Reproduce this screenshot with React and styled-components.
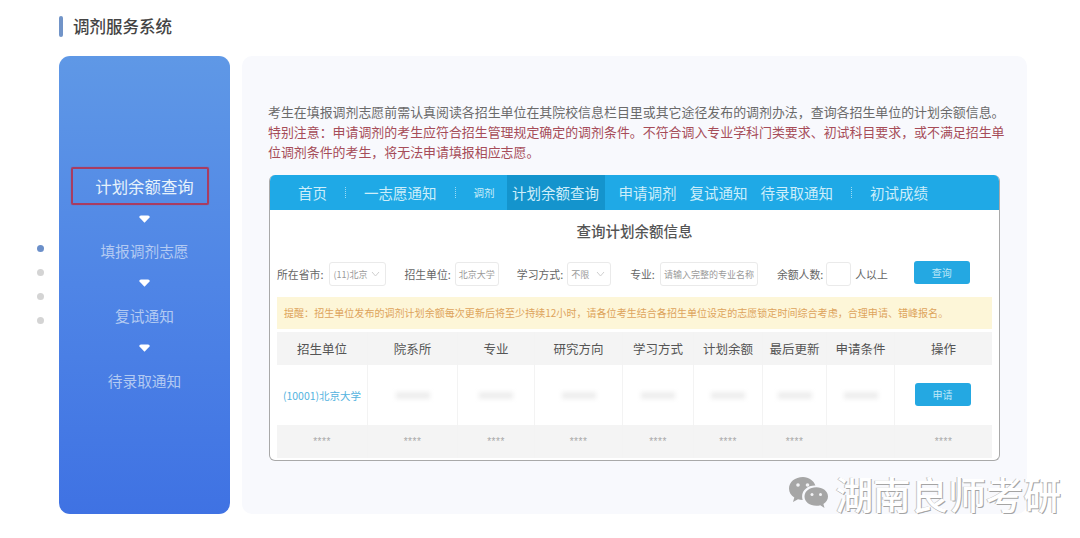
import React from "react";
import styled, { createGlobalStyle } from "styled-components";

const GlobalStyle = createGlobalStyle`
  html, body {
    margin: 0;
    padding: 0;
    background: #fff;
  }
  * {
    box-sizing: border-box;
  }
`;

const Page = styled.div`
  position: relative;
  width: 1080px;
  height: 538px;
  overflow: hidden;
  padding: 14px 53px 0 37px;
  font-family: "Noto Sans CJK SC", "Noto Sans", sans-serif;
  color: #666;
`;

const Title = styled.h1`
  display: flex;
  align-items: center;
  gap: 10px;
  height: 24px;
  margin: 0 0 18px 22px;
  font-size: 16.5px;
  line-height: 23px;
  font-weight: 500;
  color: #444;
`;

const TitleMark = styled.span`
  width: 4px;
  height: 21px;
  border-radius: 2px;
  background: #7194c8;
`;

const Body = styled.div`
  display: flex;
  height: 458px;
`;

const Dots = styled.div`
  display: flex;
  flex: none;
  flex-direction: column;
  gap: 17px;
  width: 22px;
  padding-top: 189px;
`;

const Dot = styled.span`
  width: 7px;
  height: 7px;
  border-radius: 50%;
  background: ${(p) => (p.$active ? "#6b8fc9" : "#d4d4d4")};
`;

const Sidebar = styled.nav`
  display: flex;
  flex: none;
  flex-direction: column;
  align-items: center;
  width: 171px;
  margin-right: 12px;
  padding-top: 111px;
  border-radius: 11px;
  background: linear-gradient(180deg, #5f98e6 0%, #4f85e6 50%, #3f72e3 100%);
`;

const StepLabel = styled.div`
  display: flex;
  align-items: center;
  justify-content: center;
  height: ${(p) => (p.$active ? "38px" : "28px")};
  width: ${(p) => (p.$active ? "138px" : "auto")};
  margin-right: ${(p) => (p.$active ? "10px" : "0")};
  padding-left: ${(p) => (p.$active ? "10px" : "0")};
  border: ${(p) => (p.$active ? "2px solid #a83c62" : "none")};
  border-radius: 2px;
  box-shadow: ${(p) => (p.$active ? "0 0 1px #a83c62" : "none")};
  font-size: ${(p) => (p.$active ? "16.4px" : "14.7px")};
  color: ${(p) => (p.$active ? "#e6f2fb" : "#b3caf2")};
  white-space: nowrap;
`;

const StepArrow = styled.svg`
  display: block;
  width: 11px;
  height: 8px;
  margin: ${(p) => (p.$first ? "10px 0 13px" : "15px 0 14px")};
`;

const Panel = styled.main`
  flex: 1;
  min-width: 0;
  padding: 46px 26px 0 26px;
  border-radius: 10px;
  background: #f8f9fd;
`;

const Notice = styled.p`
  margin: 0 0 13px;
  font-size: 12.93px;
  line-height: 20px;
  color: #6a6a6a;
  white-space: nowrap;
`;

const Warn = styled.span`
  color: #a64c58;
`;

const Card = styled.section`
  width: 731px;
  height: 286px;
  margin-left: 1px;
  border: 1px solid #a9a9a9;
  border-top: none;
  border-radius: 6px;
  background: #fff;
  overflow: hidden;
`;

const TopNav = styled.div`
  display: flex;
  align-items: center;
  height: 35px;
  padding-left: 29px;
  margin: 0 -1px;
  background: #1fa9e6;
  color: #cdeefa;
  white-space: nowrap;
`;

const NavItem = styled.span`
  display: flex;
  align-items: center;
  height: 100%;
  margin-left: ${(p) => p.$left || 0}px;
  font-size: ${(p) => p.$size || 14.5}px;
`;

const NavActive = styled(NavItem)`
  width: 98px;
  justify-content: center;
  background: #1494cd;
`;

const NavSep = styled.i`
  width: 1px;
  height: 11px;
  margin-left: ${(p) => p.$left}px;
  border-left: 1px dotted #9bdcf6;
`;

const CardTitle = styled.h2`
  margin: 0;
  height: 51px;
  padding-top: 9px;
  text-align: center;
  font-size: 14.5px;
  line-height: 24px;
  font-weight: 500;
  color: #555;
`;

const FilterRow = styled.div`
  display: flex;
  align-items: center;
  height: 26px;
  padding-left: 7px;
  font-size: 10.85px;
  color: #666;
  white-space: nowrap;
`;

const FilterLabel = styled.span`
  margin-left: ${(p) => p.$left || 0}px;
  margin-right: ${(p) => p.$right || 5}px;
`;

const Field = styled.span`
  display: flex;
  align-items: center;
  justify-content: space-between;
  flex: none;
  width: ${(p) => p.$width}px;
  height: 24px;
  padding: 0 5px 0 3px;
  border: 1px solid #eaeaea;
  border-radius: 3px;
  background: #fff;
  font-size: 9px;
  color: #9a9a9a;
`;

const Chevron = styled.svg`
  width: 9px;
  height: 6px;
`;

const BlueButton = styled.button`
  display: block;
  flex: none;
  width: 56px;
  height: 23px;
  padding: 0;
  border: none;
  border-radius: 3px;
  background: #24a8e2;
  color: #bfe8f8;
  font-family: inherit;
  font-size: 10px;
`;

const SearchButton = styled(BlueButton)`
  margin-left: 21px;
  margin-top: -4px;
`;

const ApplyButton = styled(BlueButton)`
  margin: 0 2px 2px 0;
`;

const Alert = styled.div`
  height: 32px;
  margin: 10px 7px 3px;
  padding-left: 7px;
  background: #fdf6d8;
  color: #dda45c;
  font-size: 10.05px;
  line-height: 32px;
  white-space: nowrap;
`;

const Table = styled.div`
  display: grid;
  grid-template-columns: 90px 90px 77px 88px 71px 69px 64px 68px 98px;
  grid-auto-rows: auto;
  margin: 0 7px;
`;

const Cell = styled.div`
  display: flex;
  align-items: center;
  justify-content: center;
  height: ${(p) => p.$height}px;
  border-left: ${(p) => (p.$first ? "none" : "1px solid #f3f3f3")};
  background: ${(p) => (p.$shade ? "#f4f4f4" : "#fff")};
`;

const HeadCell = styled(Cell)`
  font-size: 12.5px;
  color: #555;
  white-space: nowrap;
`;

const UniLink = styled.span`
  font-size: 10.5px;
  color: #53b3e0;
  white-space: nowrap;
`;

const Smudge = styled.span`
  display: block;
  width: 34px;
  height: 7px;
  background: #eeeeee;
  filter: blur(2px);
`;

const Stars = styled.span`
  font-family: "Liberation Sans", sans-serif;
  font-size: 10px;
  letter-spacing: 0.5px;
  color: #a8a8a8;
`;

const Watermark = styled.div`
  position: absolute;
  right: 19px;
  top: 471px;
  display: flex;
  align-items: center;
  gap: 7px;
`;

const WatermarkText = styled.span`
  font-size: 37.6px;
  line-height: 44px;
  font-weight: 500;
  color: #fff;
  text-shadow: 1px 1px 0 #a4a4a4, -1px 0 0 #c4c4c4;
  white-space: nowrap;
`;

const heads = ["招生单位", "院系所", "专业", "研究方向", "学习方式", "计划余额", "最后更新", "申请条件", "操作"];

// full-width punctuation kept as escapes so it can't get normalised by an editor
const noticeLine = "考生在填报调剂志愿前需认真阅读各招生单位在其院校信息栏目里或其它途径发布的调剂办法\uFF0C查询各招生单位的计划余额信息。";
const warnLine1 = "特别注意\uFF1A申请调剂的考生应符合招生管理规定确定的调剂条件。不符合调入专业学科门类要求、初试科目要求\uFF0C或不满足招生单";
const warnLine2 = "位调剂条件的考生\uFF0C将无法申请填报相应志愿。";
const alertText = "提醒\uFF1A招生单位发布的调剂计划余额每次更新后将至少持续12小时\uFF0C请各位考生结合各招生单位设定的志愿锁定时间综合考虑\uFF0C合理申请\u3001错峰报名。";

const Arrow = ({ first }) => (
  <StepArrow $first={first} viewBox="0 0 11 8">
    <path d="M2 0.5 H9 Q10.8 0.5 10.8 2.2 L5.5 7.8 L0.2 2.2 Q0.2 0.5 2 0.5 Z" fill="#fff" />
  </StepArrow>
);

const Caret = () => (
  <Chevron viewBox="0 0 9 6">
    <path d="M1 1 L4.5 5 L8 1" fill="none" stroke="#cfcfcf" strokeWidth="1" />
  </Chevron>
);

const WeChat = () => (
  <svg width="41" height="35" viewBox="0 0 41 35">
    <path
      d="M15 1 C7 1 1 6 1 12.5 C1 16.3 3 19.4 6.3 21.5 L5 26 L10 23.2 C11.500 23.700 13 24 14.700 24 C14.300 22.800 14.100 21.600 14.100 20.400 C14.100 14 20 9.200 27.400 9.500 C25.700 4.600 20.800 1 15 1 Z"
      fill="#a6a6a6"
    />
    <path
      d="M40 20.500 C40 14.900 34.600 11.200 28.300 11.200 C21.700 11.200 16.500 15.200 16.500 20.500 C16.500 25.800 21.700 29.800 28.300 29.800 C29.700 29.800 31 29.600 32.300 29.200 L36.500 32 L35.400 28 C38.200 26.100 40 23.500 40 20.500 Z"
      fill="#a6a6a6"
    />
    <circle cx="10" cy="9" r="1.800" fill="#f3f3f5" />
    <circle cx="19.500" cy="9" r="1.800" fill="#f3f3f5" />
    <circle cx="24" cy="18.500" r="1.500" fill="#f3f3f5" />
    <circle cx="32.500" cy="18.500" r="1.500" fill="#f3f3f5" />
  </svg>
);

export default function App() {
  return (
    <Page>
      <GlobalStyle />
      <Title>
        <TitleMark />
        调剂服务系统
      </Title>
      <Body>
        <Dots>
          <Dot $active />
          <Dot />
          <Dot />
          <Dot />
        </Dots>
        <Sidebar>
          <StepLabel $active>计划余额查询</StepLabel>
          <Arrow first />
          <StepLabel>填报调剂志愿</StepLabel>
          <Arrow />
          <StepLabel>复试通知</StepLabel>
          <Arrow />
          <StepLabel>待录取通知</StepLabel>
        </Sidebar>
        <Panel>
          <Notice>
            {noticeLine}
            <br />
            <Warn>
              {warnLine1}
              <br />
              {warnLine2}
            </Warn>
          </Notice>
          <Card>
            <TopNav>
              <NavItem>首页</NavItem>
              <NavSep $left={18} />
              <NavItem $left={18}>一志愿通知</NavItem>
              <NavSep $left={18} />
              <NavItem $left={18} $size={10.5}>调剂</NavItem>
              <NavActive $left={12}>计划余额查询</NavActive>
              <NavItem $left={14}>申请调剂</NavItem>
              <NavItem $left={13}>复试通知</NavItem>
              <NavItem $left={13}>待录取通知</NavItem>
              <NavSep $left={18} />
              <NavItem $left={18}>初试成绩</NavItem>
            </TopNav>
            <CardTitle>查询计划余额信息</CardTitle>
            <FilterRow>
              <FilterLabel $right={6}>所在省市:</FilterLabel>
              <Field $width={57}>(11)北京<Caret /></Field>
              <FilterLabel $left={18} $right={4}>招生单位:</FilterLabel>
              <Field $width={44}>北京大学</Field>
              <FilterLabel $left={18} $right={4}>学习方式:</FilterLabel>
              <Field $width={44}>不限<Caret /></Field>
              <FilterLabel $left={19}>专业:</FilterLabel>
              <Field $width={98}>请输入完整的专业名称</Field>
              <FilterLabel $left={19} $right={3}>余额人数:</FilterLabel>
              <Field $width={25} />
              <FilterLabel $left={4} $right={0}>人以上</FilterLabel>
              <SearchButton>查询</SearchButton>
            </FilterRow>
            <Alert>{alertText}</Alert>
            <Table>
              {heads.map((h, i) => (
                <HeadCell key={h} $height={33} $shade $first={i === 0}>{h}</HeadCell>
              ))}
              {heads.map((h, i) => (
                <Cell key={h} $height={60} $first={i === 0}>
                  {i === 0 && <UniLink>(10001)北京大学</UniLink>}
                  {i > 0 && i < 8 && <Smudge />}
                  {i === 8 && <ApplyButton>申请</ApplyButton>}
                </Cell>
              ))}
              {heads.map((h, i) => (
                <Cell key={h} $height={33} $shade $first={i === 0}>
                  {i !== 7 && <Stars>****</Stars>}
                </Cell>
              ))}
            </Table>
          </Card>
        </Panel>
      </Body>
      <Watermark>
        <WeChat />
        <WatermarkText>湖南良师考研</WatermarkText>
      </Watermark>
    </Page>
  );
}
